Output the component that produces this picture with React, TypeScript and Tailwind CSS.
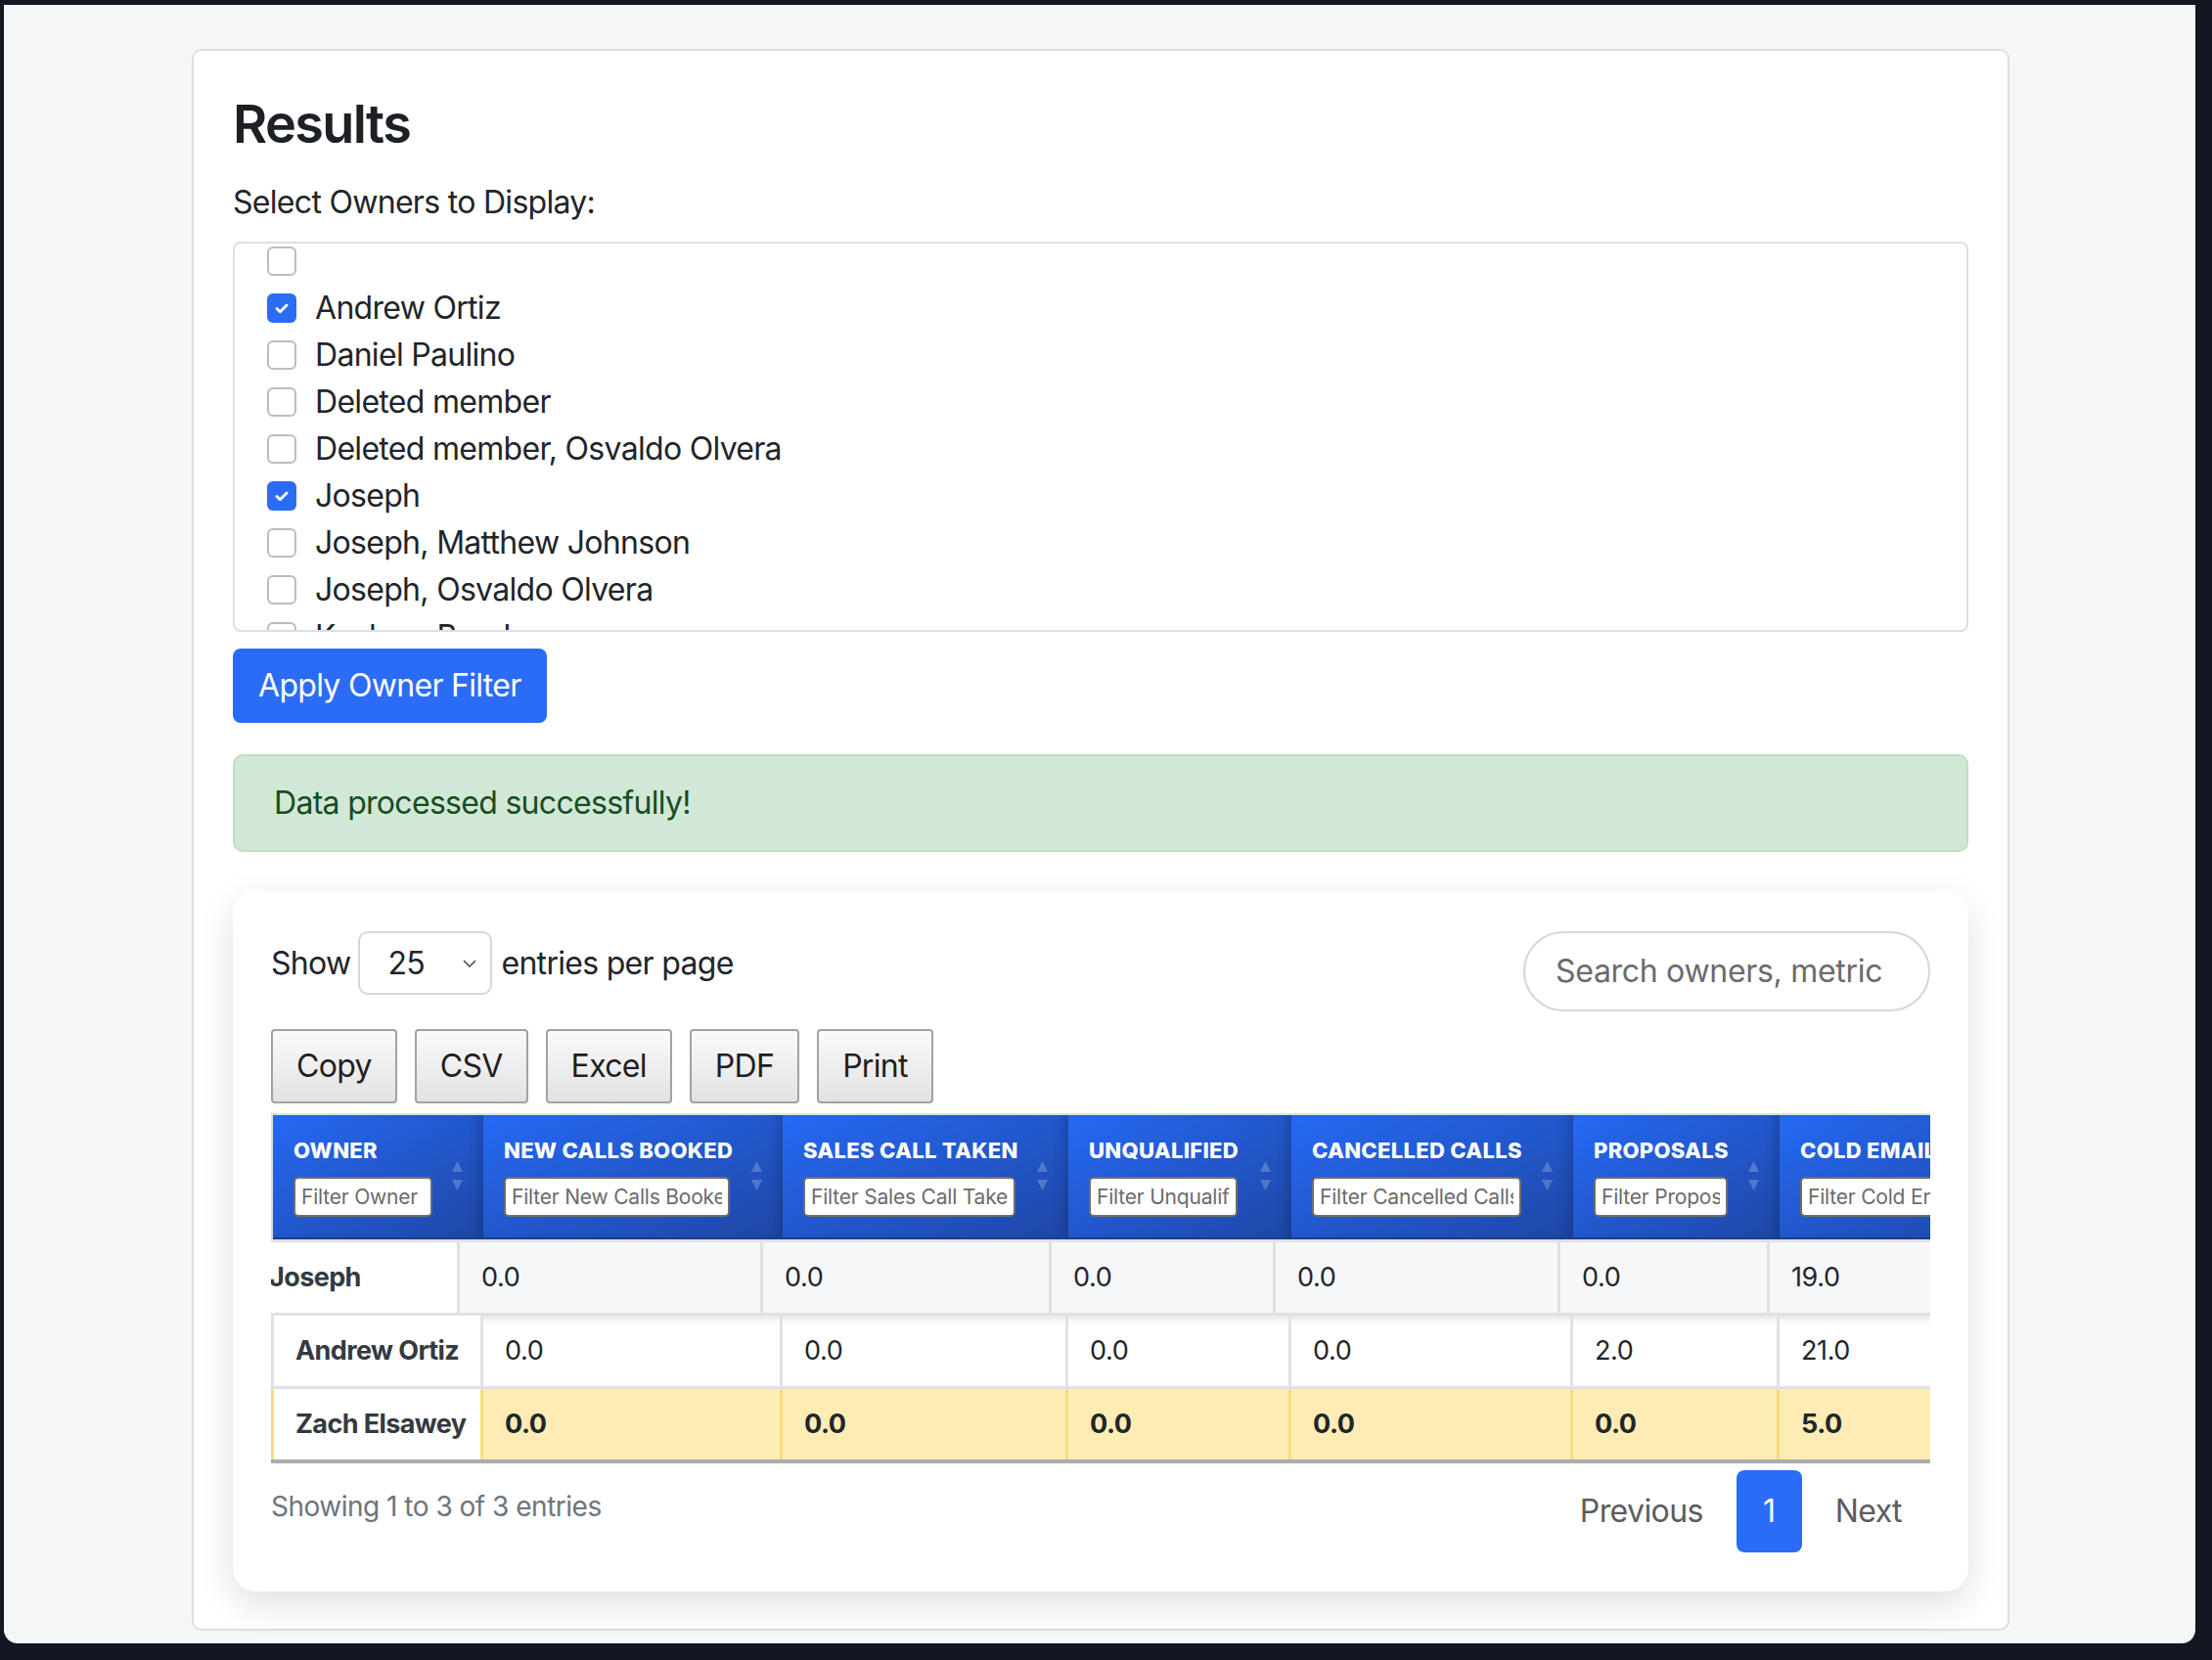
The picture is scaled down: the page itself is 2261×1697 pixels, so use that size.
import React from 'react'

const owners = [
    { name: '', checked: false },
    { name: 'Andrew Ortiz', checked: true },
    { name: 'Daniel Paulino', checked: false },
    { name: 'Deleted member', checked: false },
    { name: 'Deleted member, Osvaldo Olvera', checked: false },
    { name: 'Joseph', checked: true },
    { name: 'Joseph, Matthew Johnson', checked: false },
    { name: 'Joseph, Osvaldo Olvera', checked: false },
    { name: 'Kayleen Brooks', checked: false },
]

const columns = [
    { label: 'OWNER', w: 'w-[215px]', fw: 'w-[142px]', ph: 'Filter Owner' },
    { label: 'NEW CALLS BOOKED', w: 'w-[306px]', fw: 'w-[231px]', ph: 'Filter New Calls Booked' },
    { label: 'SALES CALL TAKEN', w: 'w-[292px]', fw: 'w-[217px]', ph: 'Filter Sales Call Taken' },
    { label: 'UNQUALIFIED', w: 'w-[228px]', fw: 'w-[152px]', ph: 'Filter Unqualified' },
    { label: 'CANCELLED CALLS', w: 'w-[288px]', fw: 'w-[214px]', ph: 'Filter Cancelled Calls' },
    { label: 'PROPOSALS', w: 'w-[211px]', fw: 'w-[137px]', ph: 'Filter Proposals' },
    { label: 'COLD EMAIL', w: 'w-[230px]', fw: 'w-[180px]', ph: 'Filter Cold Email' },
]

// the pinned first row renders a bit wider and shifted left
const pinnedWidths = ['w-[219px]', 'w-[310px]', 'w-[295px]', 'w-[229px]', 'w-[291px]', 'w-[214px]', 'w-[240px]']
const rowWidths = ['w-[217px]', 'w-[306px]', 'w-[292px]', 'w-[228px]', 'w-[288px]', 'w-[211px]', 'w-[230px]']

const rows = [
    { owner: 'Andrew Ortiz', values: ['0.0', '0.0', '0.0', '0.0', '2.0', '21.0'], top: false },
    { owner: 'Zach Elsawey', values: ['0.0', '0.0', '0.0', '0.0', '0.0', '5.0'], top: true },
]

const Checkbox = ({ checked }: { checked: boolean }) => (
    checked ? (
        <span className="w-[30px] h-[30px] rounded-[6px] bg-[#2b6cf6] flex items-center justify-center shrink-0">
            <svg width="20" height="20" viewBox="0 0 20 20">
                <path d="M5 10.5l3.3 3.3L15 7" fill="none" stroke="white" strokeWidth="2.8" strokeLinecap="round" strokeLinejoin="round" />
            </svg>
        </span>
    ) : (
        <span className="w-[30px] h-[30px] rounded-[6px] border-2 border-[#b8bdc3] bg-white shrink-0" />
    )
)

const SortArrows = () => (
    <svg className="absolute right-[21px] top-[47px]" width="11" height="30" viewBox="0 0 11 30">
        <path d="M5.5 0 L11 11 L0 11 Z" fill="rgba(255,255,255,0.22)" />
        <path d="M0 19 L11 19 L5.5 30 Z" fill="rgba(255,255,255,0.22)" />
    </svg>
)

export default function App() {
    return (
        <div className="w-[2261px] h-[1697px] bg-[#131722] pt-[5px] pl-[4px] overflow-hidden font-['Inter',sans-serif] text-[#212529]">
            <div className="w-[2240px] h-[1675px] bg-[#f5f6f8] rounded-b-[14px] overflow-hidden pt-[45px] pl-[192px]">
                <div className="w-[1858px] bg-white border-2 border-[#dcdee1] rounded-[10px] p-[40px] pb-[38px]">
                    <h2 className="text-[54px] leading-[70px] font-semibold tracking-[-1.6px] text-[#1d2125]">Results</h2>
                    <p className="mt-[21px] text-[32px] leading-[48px] tracking-[-0.7px]">Select Owners to Display:</p>

                    <div className="mt-[16px] h-[399px] border-2 border-[#dcdee1] rounded-[8px] overflow-hidden">
                        <div className="-mt-[6px] pl-[33px]">
                            {owners.map((o, i) => (
                                <label key={i} className="flex items-center gap-[19px] h-[48px] text-[32px] leading-[48px] tracking-[-0.7px]">
                                    <Checkbox checked={o.checked} />
                                    <span>{o.name}</span>
                                </label>
                            ))}
                        </div>
                    </div>

                    <button className="mt-[17px] h-[76px] px-[24px] bg-[#2b6cf6] border-2 border-[#2b6cf6] rounded-[8px] text-white text-[32px] leading-[48px] tracking-[-0.7px]">
                        Apply Owner Filter
                    </button>

                    <div className="mt-[32px] h-[100px] px-[40px] flex items-center bg-[#d2e8d7] border-2 border-[#bfdfc6] rounded-[10px] text-[#174d22] text-[32px] tracking-[-0.7px]">
                        Data processed successfully!
                    </div>

                    <div className="mt-[40px] bg-white rounded-[24px] shadow-[0_12px_36px_rgba(0,0,0,0.13)] px-[39px] pt-[41px] pb-[40px]">
                        <div className="flex justify-between items-start">
                            <div className="flex items-center text-[32px] h-[65px] tracking-[-0.7px]">
                                <span>Show</span>
                                <div className="ml-[8px] w-[137px] h-[65px] border-2 border-[#d3d7dc] rounded-[10px] flex items-center justify-between pl-[28px] pr-[14px]">
                                    <span>25</span>
                                    <svg width="14" height="8" viewBox="0 0 14 8">
                                        <polyline points="1,1 7,7 13,1" fill="none" stroke="#444" strokeWidth="1.5" />
                                    </svg>
                                </div>
                                <span className="ml-[9px]">entries per page</span>
                            </div>
                            <div className="w-[416px] h-[82px] border-2 border-[#d3d7dc] rounded-full flex items-center pl-[31px] overflow-hidden">
                                <span className="text-[32px] text-[#6b6b6b] whitespace-nowrap tracking-[-0.3px]">Search owners, metric</span>
                            </div>
                        </div>

                        <div className="mt-[18px] flex gap-[18px]">
                            {['Copy', 'CSV', 'Excel', 'PDF', 'Print'].map((b) => (
                                <button key={b} className="h-[76px] px-[24px] border-2 border-[#a2a2a2] rounded-[4px] bg-gradient-to-b from-[#fafafa] to-[#e2e2e2] text-[32px] tracking-[-0.7px] text-[#1f1f1f]">
                                    {b}
                                </button>
                            ))}
                        </div>

                        <div className="mt-[10px] w-[1696px] overflow-hidden">
                            <div className="flex border-t-2 border-l-2 border-[#dcdee1] w-max">
                                {columns.map((c) => (
                                    <div key={c.label} className={`${c.w} shrink-0 relative h-[127px] border-b-2 border-[#1b3c90] bg-gradient-to-br from-[#2569f4] to-[#1e47a6] shadow-[inset_-10px_0_12px_-6px_rgba(0,0,0,0.18)] pl-[21px] pt-[23px]`}>
                                        <div className="text-[22px] leading-[26px] font-extrabold text-white tracking-[0.3px] whitespace-nowrap">{c.label}</div>
                                        <input
                                            readOnly
                                            placeholder={c.ph}
                                            className={`${c.fw} mt-[14px] h-[41px] block bg-white border-2 border-[#6e6e6e] rounded-[5px] px-[6px] text-[21px] tracking-[-0.2px] placeholder:text-[#6b6b6b] outline-none`}
                                        />
                                        {c.label !== 'COLD EMAIL' && <SortArrows />}
                                    </div>
                                ))}
                            </div>
                            <div className="h-[3px] bg-[#dfe1e5]" />

                            {/* pinned row */}
                            <div className="flex -ml-[26px] w-max border-b-[3px] border-[#dfe1e5]">
                                {['Joseph', '0.0', '0.0', '0.0', '0.0', '0.0', '19.0'].map((v, i) => (
                                    <div key={i} className={`${pinnedWidths[i]} shrink-0 h-[72px] flex items-center border-r-[3px] border-[#dfe1e5] text-[27px] ${i === 0 ? 'bg-white font-bold tracking-[-0.6px] text-[#343a40] pl-[24px]' : 'bg-[#f6f7f9] tracking-[-0.4px] pl-[22px]'}`}>
                                        {v}
                                    </div>
                                ))}
                            </div>

                            {rows.map((r) => (
                                <div key={r.owner} className={`flex w-max ${r.top ? 'border-b-[4px] border-[#acacac]' : 'border-b-[3px] border-[#dfe1e5] shadow-[inset_0_12px_10px_-10px_rgba(0,0,0,0.14)]'}`}>
                                    <div className={`${rowWidths[0]} shrink-0 h-[72px] flex items-center border-l-[3px] border-r-[3px] pl-[22px] bg-white font-bold tracking-[-0.6px] text-[27px] text-[#343a40] ${r.top ? 'border-[#f8dc7c]' : 'border-[#dfe1e5]'}`}>
                                        {r.owner}
                                    </div>
                                    {r.values.map((v, i) => (
                                        <div key={i} className={`${rowWidths[i + 1]} shrink-0 h-[72px] flex items-center border-r-[3px] pl-[22px] text-[27px] tracking-[-0.4px] ${r.top ? 'bg-[#fdedb5] border-[#f8dc7c] font-bold' : 'bg-transparent border-[#dfe1e5]'}`}>
                                            {v}
                                        </div>
                                    ))}
                                </div>
                            ))}
                        </div>

                        <div className="mt-[7px] flex justify-between items-start">
                            <span className="mt-[16px] text-[28px] tracking-[-0.5px] text-[#6c757d]">Showing 1 to 3 of 3 entries</span>
                            <div className="flex items-center gap-[34px] pr-[29px] text-[32px] tracking-[-0.6px] text-[#5c5c5c]">
                                <span>Previous</span>
                                <span className="w-[67px] h-[84px] rounded-[8px] bg-[#2b6cf6] text-white flex items-center justify-center">1</span>
                                <span>Next</span>
                            </div>
                        </div>
                    </div>
                </div>
            </div>
        </div>
    )
}
